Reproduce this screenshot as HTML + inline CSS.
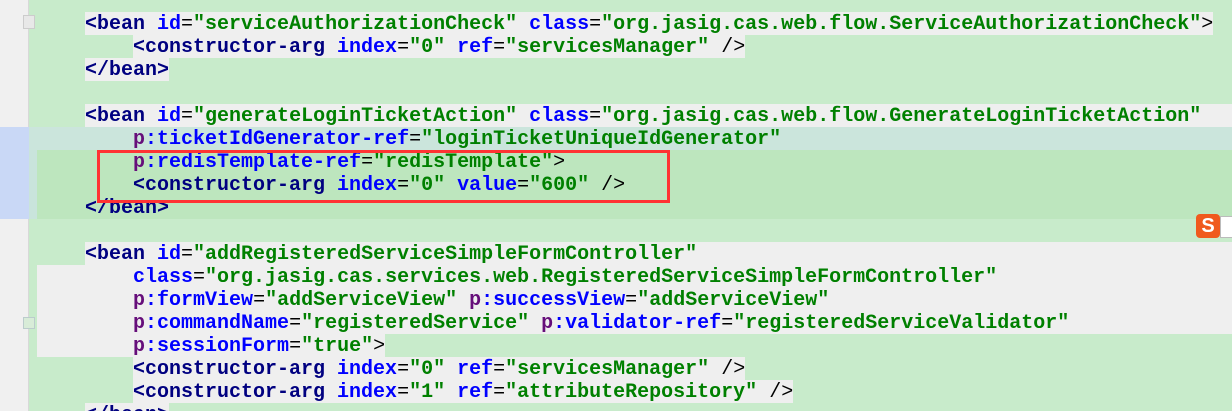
<!DOCTYPE html><html><head><style>
html,body{margin:0;width:1232px;height:411px;overflow:hidden}
body{background:#c8ebcb;position:relative;font-family:"Liberation Mono",monospace;font-weight:bold;font-size:20px}
.g{position:absolute;left:0;top:0;width:28px;height:411px;background:#f0f0f0;border-right:1px solid #d8d8d8}
.r{position:absolute;height:23px}
.l{position:absolute;left:85px;height:23px;line-height:25px;white-space:pre;color:#000080}
.a{color:#0000ff}.v{color:#008000}.p{color:#660e7a}.k{color:#000;font-weight:normal}
</style></head><body>
<div class="g"></div>
<div class="r" style="left:0;top:127px;width:29px;height:92px;background:#c9d8f6"></div>
<div class="r" style="left:29px;top:127px;width:1203px;background:#cbe5dc"></div>
<div class="r" style="left:37px;top:150px;width:1195px;height:69px;background:#bde6be"></div>
<div class="r" style="left:29px;top:150px;width:8px;height:69px;background:#c9e4dc"></div>
<div class="r" style="left:85px;top:12px;width:1128px;background:#efefef"></div>
<div class="r" style="left:133px;top:35px;width:612px;background:#efefef"></div>
<div class="r" style="left:85px;top:58px;width:84px;background:#efefef"></div>
<div class="r" style="left:85px;top:104px;width:1147px;background:#efefef"></div>
<div class="r" style="left:85px;top:242px;width:1147px;background:#efefef"></div>
<div class="r" style="left:37px;top:265px;width:1195px;height:69px;background:#efefef"></div>
<div class="r" style="left:37px;top:334px;width:348px;background:#efefef"></div>
<div class="r" style="left:133px;top:357px;width:612px;background:#efefef"></div>
<div class="r" style="left:133px;top:380px;width:660px;background:#efefef"></div>
<div class="r" style="left:85px;top:403px;width:84px;background:#efefef"></div>
<div class="l" style="top:12px">&lt;bean <span class="a">id</span><span class="k">=</span><span class="v">"serviceAuthorizationCheck"</span> <span class="a">class</span><span class="k">=</span><span class="v">"org.jasig.cas.web.flow.ServiceAuthorizationCheck"</span><span class="k">&gt;</span></div>
<div class="l" style="top:35px">    &lt;constructor-arg <span class="a">index</span><span class="k">=</span><span class="v">"0"</span> <span class="a">ref</span><span class="k">=</span><span class="v">"servicesManager"</span> <span class="k">/&gt;</span></div>
<div class="l" style="top:58px">&lt;/bean&gt;</div>
<div class="l" style="top:104px">&lt;bean <span class="a">id</span><span class="k">=</span><span class="v">"generateLoginTicketAction"</span> <span class="a">class</span><span class="k">=</span><span class="v">"org.jasig.cas.web.flow.GenerateLoginTicketAction"</span></div>
<div class="l" style="top:127px">    <span class="p">p</span><span class="a">:ticketIdGenerator-ref</span><span class="k">=</span><span class="v">"loginTicketUniqueIdGenerator"</span></div>
<div class="l" style="top:150px">    <span class="p">p</span><span class="a">:redisTemplate-ref</span><span class="k">=</span><span class="v">"redisTemplate"</span><span class="k">&gt;</span></div>
<div class="l" style="top:173px">    &lt;constructor-arg <span class="a">index</span><span class="k">=</span><span class="v">"0"</span> <span class="a">value</span><span class="k">=</span><span class="v">"600"</span> <span class="k">/&gt;</span></div>
<div class="l" style="top:196px">&lt;/bean&gt;</div>
<div class="l" style="top:242px">&lt;bean <span class="a">id</span><span class="k">=</span><span class="v">"addRegisteredServiceSimpleFormController"</span></div>
<div class="l" style="top:265px">    <span class="a">class</span><span class="k">=</span><span class="v">"org.jasig.cas.services.web.RegisteredServiceSimpleFormController"</span></div>
<div class="l" style="top:288px">    <span class="p">p</span><span class="a">:formView</span><span class="k">=</span><span class="v">"addServiceView"</span> <span class="p">p</span><span class="a">:successView</span><span class="k">=</span><span class="v">"addServiceView"</span></div>
<div class="l" style="top:311px">    <span class="p">p</span><span class="a">:commandName</span><span class="k">=</span><span class="v">"registeredService"</span> <span class="p">p</span><span class="a">:validator-ref</span><span class="k">=</span><span class="v">"registeredServiceValidator"</span></div>
<div class="l" style="top:334px">    <span class="p">p</span><span class="a">:sessionForm</span><span class="k">=</span><span class="v">"true"</span><span class="k">&gt;</span></div>
<div class="l" style="top:357px">    &lt;constructor-arg <span class="a">index</span><span class="k">=</span><span class="v">"0"</span> <span class="a">ref</span><span class="k">=</span><span class="v">"servicesManager"</span> <span class="k">/&gt;</span></div>
<div class="l" style="top:380px">    &lt;constructor-arg <span class="a">index</span><span class="k">=</span><span class="v">"1"</span> <span class="a">ref</span><span class="k">=</span><span class="v">"attributeRepository"</span> <span class="k">/&gt;</span></div>
<div class="l" style="top:403px;height:8px;overflow:hidden">&lt;/bean&gt;</div>
<div style="position:absolute;left:97px;top:150px;width:567px;height:47px;border:3px solid #f33"></div>
<div style="position:absolute;left:23px;top:15px;width:10px;height:12px;background:#e8e8e8;border:1px solid #ccc"></div>
<div style="position:absolute;left:23px;top:317px;width:10px;height:10px;background:#d8ecd8;border:1px solid #bcc"></div>
<div style="position:absolute;left:1220px;top:216px;width:14px;height:20px;background:#fff;border:1px solid #bbb"></div>
<div style="position:absolute;left:1196px;top:214px;width:24px;height:24px;background:#f05a1e;border-radius:4px;color:#fff;font:bold 20px 'Liberation Sans',sans-serif;text-align:center;line-height:24px">S</div>
</body></html>
